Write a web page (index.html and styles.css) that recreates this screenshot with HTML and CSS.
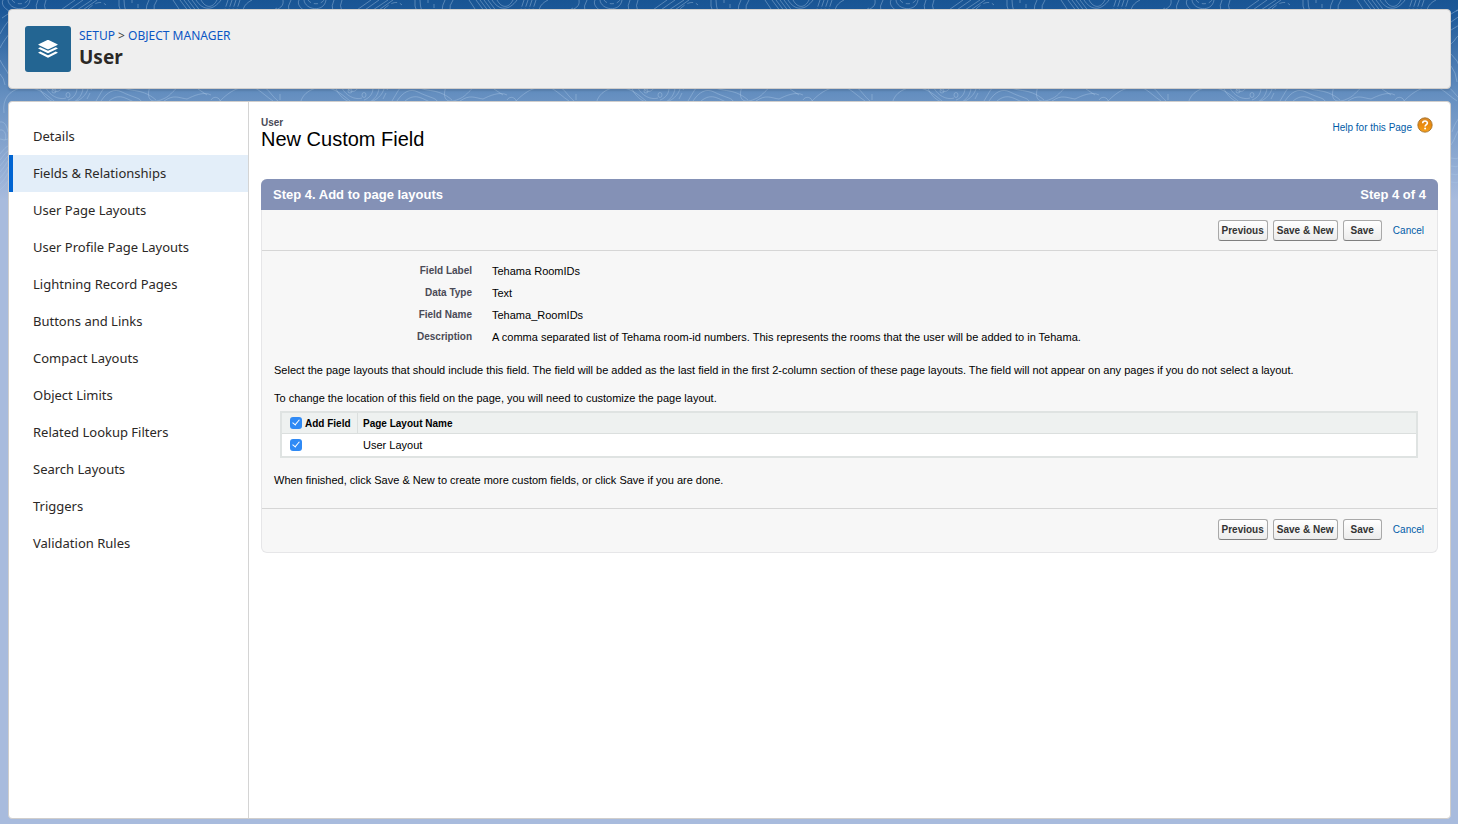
FILE: index.html
```html
<!DOCTYPE html>
<html lang="en">
<head>
    <meta charset="UTF-8">
    <title>User | New Custom Field</title>
    <link rel="stylesheet" href="styles.css">
</head>
<body>
<svg class="backdrop" aria-hidden="true">
    <defs>
        <pattern id="topo" width="296" height="230" patternUnits="userSpaceOnUse">
            <g fill="none" stroke="#a9c5e4" stroke-opacity="0.42" stroke-width="1">
                <!-- top strip -->
                <path d="M3 0 C1 4 4 8 9 11 M8 0 C9 10 28 13 30 0"/>
                <path d="M12 0 C15 5 25 5 28 0" stroke-dasharray="4 3"/>
                <path d="M38 0 Q35 5 37 12 M46 0 Q43 5 46 12"/>
                <path d="M58 12 L75 0 M66 12 L83 0 M74 12 L92 0 M80 12 L97 0"/>
                <path d="M88 9 C94 3 101 0 106 5" stroke-dasharray="6 3"/>
                <path d="M119 0 Q118 6 121 12 M124 0 Q124 6 126 12 M146 12 Q146 5 149 0 M157 0 Q153 5 154 12"/>
                <path d="M132 0 V3 M138 4 V8"/>
                <path d="M173 0 L181 12 M180 0 L189 12 M184 0 L193 12 M188 0 L197 12 M192 0 L201 12"/>
                <path d="M196 0 C203 11 213 11 221 0 M201 0 C206 9 213 8 217 0"/>
                <path d="M228 0 L224 12 M232 0 L228 12 M236 0 L232 12 M240 0 L236 12" stroke-dasharray="7 2"/>
                <path d="M252 0 C246 3 243 7 243 12 M283 0 C284 6 280 9 272 11 M291 0 Q287 6 289 12"/>
                <!-- strip between the two cards -->
                <path d="M4 113 C2 98 10 91 20 88 C38 85 46 95 59 105"/>
                <path d="M38 84 C42 96 50 103 62 104 C78 104 88 96 89 84 M44 84 C49 97 60 100 66 98"/>
                <path d="M50 84 C51 92 58 94 62 88"/>
                <circle cx="54" cy="91" r="2"/>
                <ellipse cx="68" cy="95" rx="2" ry="2.5"/>
                <path d="M76 84 C79 92 74 98 68 100 M83 84 C84 94 78 101 71 103"/>
                <path d="M94 85 L91 90 M90 93 L87 99"/>
                <path d="M96 101 C101 93 104 86 109 84 M101 101 C107 92 114 88 122 92 C132 97 140 98 141 101"/>
                <path d="M109 101 C119 93 125 98 134 102 M119 84 C127 94 140 86 156 100"/>
                <path d="M151 84 C145 98 150 105 163 99 C174 95 173 85 190 84"/>
                <path d="M164 101 C174 94 179 98 187 99 C193 96 204 91 211 95"/>
                <path d="M198 89 L207 95"/>
                <path d="M211 100 C214 95 220 98 220 101 C229 92 241 83 257 89 C263 93 267 97 273 101"/>
                <path d="M261 84 C270 91 272 96 278 101 M280 84 V89 M280 94 V100"/>
                <!-- left gutter -->
                <path d="M0 34 C6 22 11 20 14 12 M0 48 C5 38 9 36 12 28"/>
                <path d="M0 60 C4 68 7 70 10 78 M0 74 Q4 78 5 85 M2 18 L8 14" />
                <path d="M0 122 C5 121 7 127 8 132 M0 130 C5 129 7 136 5 140 M0 139 Q5 141 8 139"/>
                <path d="M0 154 C4 149 6 147 8 146 M0 160 C4 155 6 152 8 151 M0 166 C4 161 6 158 8 156 M0 172 C4 167 6 164 8 161 M0 178 C4 174 6 170 8 167 M0 184 C4 180 6 177 8 173 M0 190 Q4 187 8 181"/>
                <!-- right gutter -->
                <path d="M267 14 L277 8 M267 22 L277 15 M267 30 L277 24 M267 44 C272 40 272 36 277 34"/>
                <path d="M267 54 Q274 60 277 70 M267 66 Q272 72 273 82"/>
                <path d="M268 132 C270 125 273 120 277 116 M267 145 C271 140 272 132 277 127 M267 158 Q272 160 277 157 M267 166 Q272 168 277 165 M267 174 Q272 176 277 173 M267 182 Q272 184 277 181"/>
            </g>
        </pattern>
    </defs>
    <rect width="100%" height="230" fill="url(#topo)"/>
</svg>

<header class="page-header">
    <svg class="object-icon" viewBox="0 0 46 46" aria-hidden="true">
        <rect width="46" height="46" rx="3" fill="#236592"/>
        <g fill="#fff">
            <path d="M22.4 14.1 Q23 13.8 23.6 14.1 L32.4 18.2 Q33.1 18.6 32.4 19 L23.6 23.2 Q23 23.5 22.4 23.2 L13.6 19 Q12.9 18.6 13.6 18.2 Z"/>
            <path d="M13.6 22 L15.3 21.2 L22.3 24.6 Q23 24.9 23.7 24.6 L30.7 21.2 L32.4 22 Q33.1 22.4 32.4 22.8 L23.6 27.1 Q23 27.4 22.4 27.1 L13.6 22.8 Q12.9 22.4 13.6 22 Z"/>
            <path d="M13.6 26.3 L15.3 25.5 L22.3 29 Q23 29.3 23.7 29 L30.7 25.5 L32.4 26.3 Q33.1 26.7 32.4 27.1 L23.6 31.6 Q23 31.9 22.4 31.6 L13.6 27.1 Q12.9 26.7 13.6 26.3 Z"/>
        </g>
    </svg>
    <div class="header-text">
        <nav class="breadcrumb"><a href="#">SETUP</a> &gt; <a href="#">OBJECT MANAGER</a></nav>
        <h1>User</h1>
    </div>
</header>

<div class="workspace">
    <nav class="sidebar">
        <a href="#">Details</a>
        <a href="#" class="active">Fields &amp; Relationships</a>
        <a href="#">User Page Layouts</a>
        <a href="#">User Profile Page Layouts</a>
        <a href="#">Lightning Record Pages</a>
        <a href="#">Buttons and Links</a>
        <a href="#">Compact Layouts</a>
        <a href="#">Object Limits</a>
        <a href="#">Related Lookup Filters</a>
        <a href="#">Search Layouts</a>
        <a href="#">Triggers</a>
        <a href="#">Validation Rules</a>
    </nav>

    <main class="content">
        <div class="title-row">
            <div>
                <div class="page-type">User</div>
                <h2>New Custom Field</h2>
            </div>
            <a href="#" class="help-link">
                <span>Help for this Page</span>
                <svg width="16" height="16" viewBox="0 0 16 16" aria-hidden="true">
                    <defs>
                        <linearGradient id="orange" x1="0" y1="0" x2="0" y2="1">
                            <stop offset="0" stop-color="#d98a2c"/>
                            <stop offset="0.5" stop-color="#ea8a0c"/>
                            <stop offset="1" stop-color="#f5a11e"/>
                        </linearGradient>
                    </defs>
                    <circle cx="8" cy="8" r="7.2" fill="url(#orange)" stroke="#9c6a24" stroke-width="0.8"/>
                    <path d="M5.7 6.2 C5.7 3.4 10.4 3.4 10.4 6 C10.4 7.6 8.1 7.8 8.1 9.6" fill="none" stroke="#fff" stroke-width="1.6"/>
                    <circle cx="8.1" cy="11.6" r="1" fill="#fff"/>
                </svg>
            </a>
        </div>

        <form class="wizard">
            <div class="wizard-header">
                <h3>Step 4. Add to page layouts</h3>
                <span>Step 4 of 4</span>
            </div>

            <div class="button-row">
                <button type="button">Previous</button>
                <button type="button">Save &amp; New</button>
                <button type="button" class="save">Save</button>
                <a href="#">Cancel</a>
            </div>

            <div class="wizard-body">
                <dl class="details">
                    <dt>Field Label</dt>
                    <dd>Tehama RoomIDs</dd>
                    <dt>Data Type</dt>
                    <dd>Text</dd>
                    <dt>Field Name</dt>
                    <dd>Tehama_RoomIDs</dd>
                    <dt>Description</dt>
                    <dd>A comma separated list of Tehama room-id numbers. This represents the rooms that the user will be added to in Tehama.</dd>
                </dl>

                <p>Select the page layouts that should include this field. The field will be added as the last field in the first 2-column section of these page layouts. The field will not appear on any pages if you do not select a layout.</p>
                <p>To change the location of this field on the page, you will need to customize the page layout.</p>

                <table class="layouts">
                    <thead>
                        <tr>
                            <th class="add-field"><label><input type="checkbox" checked>Add Field</label></th>
                            <th>Page Layout Name</th>
                        </tr>
                    </thead>
                    <tbody>
                        <tr>
                            <td class="add-field"><input type="checkbox" id="userLayout" checked></td>
                            <td><label for="userLayout">User Layout</label></td>
                        </tr>
                    </tbody>
                </table>

                <p>When finished, click Save &amp; New to create more custom fields, or click Save if you are done.</p>
            </div>

            <div class="button-row bottom">
                <button type="button">Previous</button>
                <button type="button">Save &amp; New</button>
                <button type="button" class="save">Save</button>
                <a href="#">Cancel</a>
            </div>
        </form>
    </main>
</div>
</body>
</html>
```

FILE: styles.css
```css
* {
    box-sizing: border-box;
}

body {
    display: flex;
    flex-direction: column;
    gap: 12px;
    min-height: 100vh;
    margin: 0;
    padding: 9px 7px 5px 8px;
    background: #a8bbdd linear-gradient(#195594 0, #1c5898 12px, #658fc0 95px, #a8bbdd 200px) no-repeat;
    font-family: "Liberation Sans", Arial, sans-serif;
    font-size: 11px;
    color: #000;
}

a {
    color: #015ba7;
    text-decoration: none;
}

h1, h2, h3, p, dl, dd {
    margin: 0;
}

.backdrop {
    position: absolute;
    top: 0;
    left: 0;
    width: 100%;
    height: 230px;
}

/* header card */
.page-header {
    position: relative;
    display: flex;
    align-items: center;
    gap: 8px;
    height: 80px;
    padding: 0 16px;
    background: #efefef;
    border: 1px solid #d0cecc;
    border-radius: 4px;
    box-shadow: 0 2px 2px rgba(0, 0, 0, 0.1);
    font-family: "Noto Sans", "Open Sans", sans-serif;
}

.object-icon {
    width: 46px;
    height: 46px;
}

.header-text {
    padding-bottom: 2px;
}

.breadcrumb {
    font-size: 12px;
    line-height: 18px;
    color: #3e3e3c;
}

.breadcrumb a {
    color: #0b56c4;
}

.page-header h1 {
    font-size: 19px;
    line-height: 24px;
    color: #2b2826;
}

/* main card */
.workspace {
    position: relative;
    display: flex;
    flex: 1;
    background: #fff;
    border: 1px solid #d0cecc;
    border-radius: 4px;
}

.sidebar {
    flex: 0 0 240px;
    padding-top: 16px;
    border-right: 1px solid #d4d4d4;
    font-family: "Noto Sans", "Open Sans", sans-serif;
    font-size: 13px;
}

.sidebar a {
    display: block;
    padding-left: 24px;
    line-height: 37px;
    color: #2b2826;
}

.sidebar a.active {
    padding-left: 20px;
    border-left: 4px solid #0064d2;
    background: #e3eef9;
}

.content {
    flex: 1;
    padding: 15px 12px;
}

.title-row {
    display: flex;
    justify-content: space-between;
    align-items: flex-start;
    height: 62px;
}

.page-type {
    font-size: 10px;
    font-weight: bold;
    line-height: 12px;
    color: #4a4a56;
}

.title-row h2 {
    font-size: 20px;
    font-weight: normal;
    line-height: 20px;
}

.help-link {
    display: flex;
    gap: 5px;
    padding-right: 5px;
    font-size: 10px;
    line-height: 21px;
}

.wizard {
    background: #f7f7f7;
    border: 1px solid #e6e6e8;
    border-top: 0;
    border-radius: 6px;
}

.wizard-header {
    display: flex;
    justify-content: space-between;
    margin: 0 -1px;
    padding: 0 12px;
    background: #8491b6;
    border-radius: 6px 6px 0 0;
    font-size: 13px;
    font-weight: bold;
    line-height: 31px;
    color: #fff;
}

.wizard-header h3 {
    font-size: 13px;
}

.button-row {
    display: flex;
    justify-content: flex-end;
    align-items: center;
    gap: 5px;
    height: 41px;
    padding-right: 13px;
    border-bottom: 1px solid #d6d6d6;
    font-size: 10px;
}

.button-row.bottom {
    height: 44px;
    padding-bottom: 2px;
    border-top: 1px solid #d6d6d6;
    border-bottom: 0;
}

.button-row button {
    height: 21px;
    padding: 0 3px;
    border: 1px solid #a9a9a9;
    border-bottom-color: #7f7f7f;
    border-radius: 3px;
    background: linear-gradient(#fff, #ececec);
    font-family: inherit;
    font-size: 10px;
    font-weight: bold;
    color: #333;
}

.button-row .save {
    padding: 0 7px;
}

.button-row a {
    margin-left: 6px;
}

.wizard-body {
    padding: 9px 12px 21px;
}

.details {
    display: grid;
    grid-template-columns: 198px 1fr;
    column-gap: 20px;
    margin-bottom: 15px;
    line-height: 22px;
}

.details dt {
    text-align: right;
    font-size: 10px;
    font-weight: bold;
    color: #4a4a56;
}

.wizard-body p {
    margin-bottom: 14px;
    line-height: 14px;
}

.wizard-body .layouts + p {
    margin-bottom: 0;
}

.layouts {
    width: calc(100% - 13px);
    margin: -8px 7px 15px 6px;
    border: 2px solid #dfe3e2;
    border-collapse: separate;
    border-spacing: 0;
    background: #fff;
    text-align: left;
}

.layouts th,
.layouts td {
    height: 22px;
    padding: 0 5px;
    white-space: nowrap;
}

.layouts th {
    height: 21px;
    background: #eef1f0;
    border-bottom: 1px solid #dbdfde;
    font-size: 10px;
}

.layouts .add-field {
    width: 76px;
    padding: 0 0 0 8px;
}

.layouts th.add-field {
    border-right: 1px solid #dbdfde;
}

.layouts input {
    appearance: none;
    position: relative;
    width: 12px;
    height: 12px;
    margin: 0 3px 0 0;
    border-radius: 3px;
    background: #2f8af5;
    vertical-align: -2px;
}

/* white tick */
.layouts input:checked::after {
    content: "";
    position: absolute;
    left: 4px;
    top: 1px;
    width: 3px;
    height: 6px;
    border: solid #fff;
    border-width: 0 1px 1px 0;
    transform: rotate(40deg);
}
```
